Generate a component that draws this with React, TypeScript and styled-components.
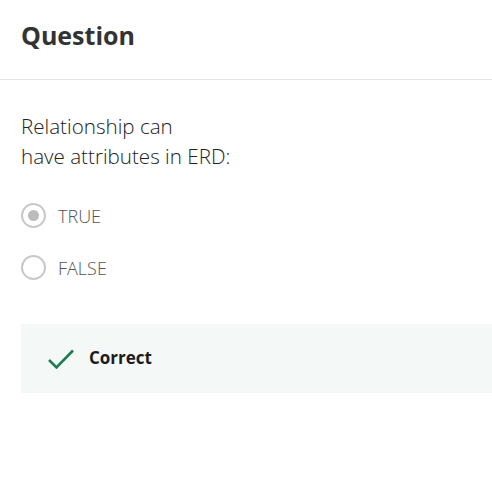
import React from 'react';
import styled, { createGlobalStyle } from 'styled-components';

const GlobalStyle = createGlobalStyle`
  body {
    margin: 0;
    background: #fff;
    font-family: 'Open Sans', 'Noto Sans', sans-serif;
  }
`;

const Header = styled.div`
  padding: 19px 21px 28px;
  border-bottom: 1px solid #e4e4e4;
`;

const Title = styled.h1`
  margin: 0;
  font-size: 25px;
  line-height: 32px;
  font-weight: 700;
  color: #333;
`;

const Body = styled.div`
  padding: 31px 0 0 21px;
`;

const Prompt = styled.p`
  margin: 0;
  font-size: 20.6px;
  line-height: 30px;
  font-weight: 300;
  color: #222;
`;

const Options = styled.div`
  display: flex;
  flex-direction: column;
  gap: 27px;
  margin-top: 32px;
`;

const Option = styled.label`
  display: flex;
  align-items: center;
  gap: 12px;
  font-size: 18px;
  font-weight: 300;
  color: #555;
  height: 25px;
`;

const Radio = styled.span<{ $checked?: boolean }>`
  box-sizing: border-box;
  width: 25px;
  height: 25px;
  border-radius: 50%;
  border: 2.5px solid #c8c8c8;
  display: flex;
  align-items: center;
  justify-content: center;

  &::after {
    content: '';
    width: 11px;
    height: 11px;
    border-radius: 50%;
    background: ${(p) => (p.$checked ? '#bcbcbc' : 'transparent')};
  }
`;

const Feedback = styled.div`
  margin-top: 44px;
  height: 69px;
  background: #f4f8f7;
  display: flex;
  align-items: center;
  gap: 14px;
  padding-left: 26px;
`;

const FeedbackText = styled.span`
  font-size: 17px;
  font-weight: 700;
  color: #1c1c1c;
  margin-bottom: 3px;
`;

const App: React.FC = () => {
  return (
    <>
      <GlobalStyle />
      <Header>
        <Title>Question</Title>
      </Header>
      <Body>
        <Prompt>
          Relationship can
          <br />
          have attributes in ERD:
        </Prompt>
        <Options>
          <Option>
            <Radio $checked />
            TRUE
          </Option>
          <Option>
            <Radio />
            FALSE
          </Option>
        </Options>
        <Feedback>
          <svg width="28" height="24" viewBox="0 0 28 24" fill="none">
            <path d="M2 13 L9.5 20.5 L26 3.5" stroke="#1f7a57" strokeWidth="2.6" />
          </svg>
          <FeedbackText>Correct</FeedbackText>
        </Feedback>
      </Body>
    </>
  );
};

export default App;
